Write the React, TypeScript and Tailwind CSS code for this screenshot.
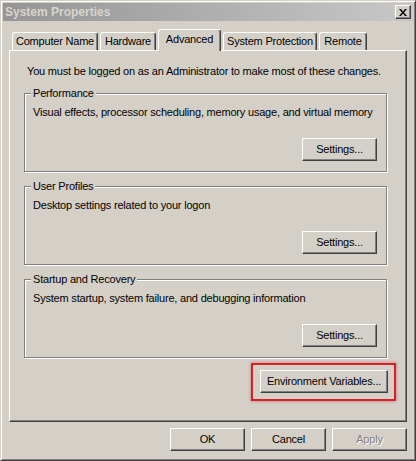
import { ReactNode } from "react";

// ============================================
// Classic Win2k-style pieces
// ============================================

const raised =
  "border border-t-white border-l-white border-r-[#404040] border-b-[#404040] shadow-[inset_-1px_-1px_0_#808080]";

interface ButtonProps {
  children: ReactNode;
  width?: string;
  disabled?: boolean;
}

function Button({ children, width = "w-[75px]", disabled = false }: ButtonProps) {
  return (
    <button
      className={`${width} h-[23px] shrink-0 flex items-center justify-center bg-[#d4d0c8] ${raised} ${
        disabled ? "text-[#808080] [text-shadow:1px_1px_0_#fff]" : "text-black"
      }`}
    >
      {children}
    </button>
  );
}

interface GroupProps {
  title: string;
  text: string;
}

function Group({ title, text }: GroupProps) {
  return (
    <div className="w-[363px] h-[79px] border border-[#808080] shadow-[inset_1px_1px_0_#fff,1px_1px_0_#fff] flex flex-col">
      <span className="-mt-[7px] ml-[6px] px-[2px] w-fit bg-[#d4d0c8] leading-[13px]">
        {title}
      </span>
      <p className="mt-[6px] ml-[8px] leading-[13px]">{text}</p>
      <div className="mt-[19px] pr-[9px] flex justify-end">
        <Button>Settings...</Button>
      </div>
    </div>
  );
}

const tabs = [
  { label: "Computer Name", w: "w-[86px]" },
  { label: "Hardware", w: "w-[56px]" },
  { label: "Advanced", w: "w-[63px]", active: true },
  { label: "System Protection", w: "w-[94px]" },
  { label: "Remote", w: "w-[48px]" },
];

export default function App() {
  return (
    <div className="w-[416px] h-[461px] bg-[#d4d0c8] border border-t-[#d4d0c8] border-l-[#d4d0c8] border-r-[#404040] border-b-[#404040] shadow-[inset_1px_1px_0_#fff,inset_-1px_-1px_0_#808080] p-[2px] flex flex-col font-['Liberation_Sans',Arial,sans-serif] text-[11px] tracking-[-0.2px] text-black select-none">
      {/* title bar */}
      <div className="h-[18px] flex items-center justify-between pl-[2px] pr-[2px] bg-gradient-to-r from-[#959595] to-[#c8c8c8]">
        <span className="font-bold text-[12px] tracking-normal text-[#d8d4cc]">
          System Properties
        </span>
        <button className={`w-[16px] h-[14px] flex items-center justify-center bg-[#d4d0c8] ${raised}`}>
          <svg width="8" height="7" viewBox="0 0 8 7">
            <path d="M0 0h2l2 2.5L6 0h2L5 3.5 8 7H6L4 4.5 2 7H0l3-3.5z" fill="#000" />
          </svg>
        </button>
      </div>

      <div className="px-[6px] flex flex-col">
        {/* tabs */}
        <div className="mt-[8px] h-[21px] pl-[3px] flex items-end gap-[2px]">
          {tabs.map((t) =>
            t.active ? (
              <div
                key={t.label}
                className={`${t.w} h-[22px] -mb-[1px] relative z-10 bg-[#d4d0c8] border-t border-l border-r border-t-white border-l-white border-r-[#404040] rounded-t-[3px] shadow-[inset_-1px_0_0_#808080] flex items-center justify-center pb-[3px]`}
              >
                {t.label}
              </div>
            ) : (
              <div
                key={t.label}
                className={`${t.w} h-[18px] bg-[#d4d0c8] border-t border-l border-r border-t-white border-l-white border-r-[#404040] rounded-t-[3px] shadow-[inset_-1px_0_0_#808080] flex items-center justify-center`}
              >
                {t.label}
              </div>
            )
          )}
        </div>

        {/* tab panel */}
        <div className={`h-[372px] pl-[14px] pt-[14px] flex flex-col ${raised}`}>
          <p className="leading-[13px] pl-[3px]">
            You must be logged on as an Administrator to make most of these changes.
          </p>
          <div className="mt-[15px] flex flex-col gap-[14px]">
            <Group
              title="Performance"
              text="Visual effects, processor scheduling, memory usage, and virtual memory"
            />
            <Group title="User Profiles" text="Desktop settings related to your logon" />
            <Group
              title="Startup and Recovery"
              text="System startup, system failure, and debugging information"
            />
          </div>
          <div className="w-[363px] mt-[5px] flex justify-end">
            <div className="-mr-[9px] border-2 border-[#d42226] shadow-[0_0_3px_rgba(210,30,30,0.55)] pt-[5px] pl-[7px] pr-[6px] pb-[6px]">
              <Button width="w-[128px]">Environment Variables...</Button>
            </div>
          </div>
        </div>

        {/* dialog buttons */}
        <div className="mt-[6px] flex justify-end gap-[6px]">
          <Button>OK</Button>
          <Button>Cancel</Button>
          <Button disabled>Apply</Button>
        </div>
      </div>
    </div>
  );
}
